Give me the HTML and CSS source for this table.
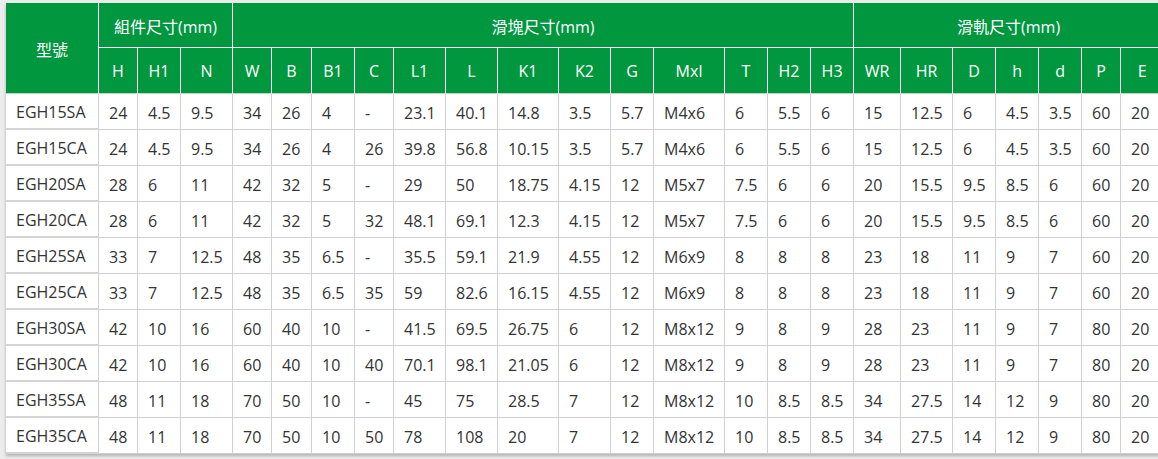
FILE: index.html
```html
<!DOCTYPE html>
<html lang="zh-Hant">
<head>
<meta charset="utf-8">
<title>EGH 規格表</title>
<link rel="stylesheet" href="styles.css">
</head>
<body>
<div class="wrap">
<table class="spec">
<colgroup>
<col class="c93"><col class="c39"><col class="c43"><col class="c52">
<col class="c39"><col class="c40"><col class="c43"><col class="c39"><col class="c52"><col class="c52"><col class="c61"><col class="c52"><col class="c43"><col class="c71"><col class="c43"><col class="c43"><col class="c43">
<col class="c47"><col class="c52"><col class="c43"><col class="c43"><col class="c43"><col class="c39"><col class="c43">
</colgroup>
<thead>
<tr class="h1">
<th rowspan="2" class="model-h">型號</th>
<th colspan="3">組件尺寸(mm)</th>
<th colspan="13">滑塊尺寸(mm)</th>
<th colspan="7">滑軌尺寸(mm)</th>
</tr>
<tr class="h2">
<th>H</th><th>H1</th><th>N</th>
<th>W</th><th>B</th><th>B1</th><th>C</th><th>L1</th><th>L</th><th>K1</th><th>K2</th><th>G</th><th>Mxl</th><th>T</th><th>H2</th><th>H3</th>
<th>WR</th><th>HR</th><th>D</th><th>h</th><th>d</th><th>P</th><th>E</th>
</tr>
</thead>
<tbody>
<tr><td>EGH15SA</td><td>24</td><td>4.5</td><td>9.5</td><td>34</td><td>26</td><td>4</td><td>-</td><td>23.1</td><td>40.1</td><td>14.8</td><td>3.5</td><td>5.7</td><td>M4x6</td><td>6</td><td>5.5</td><td>6</td><td>15</td><td>12.5</td><td>6</td><td>4.5</td><td>3.5</td><td>60</td><td>20</td></tr>
<tr><td>EGH15CA</td><td>24</td><td>4.5</td><td>9.5</td><td>34</td><td>26</td><td>4</td><td>26</td><td>39.8</td><td>56.8</td><td>10.15</td><td>3.5</td><td>5.7</td><td>M4x6</td><td>6</td><td>5.5</td><td>6</td><td>15</td><td>12.5</td><td>6</td><td>4.5</td><td>3.5</td><td>60</td><td>20</td></tr>
<tr><td>EGH20SA</td><td>28</td><td>6</td><td>11</td><td>42</td><td>32</td><td>5</td><td>-</td><td>29</td><td>50</td><td>18.75</td><td>4.15</td><td>12</td><td>M5x7</td><td>7.5</td><td>6</td><td>6</td><td>20</td><td>15.5</td><td>9.5</td><td>8.5</td><td>6</td><td>60</td><td>20</td></tr>
<tr><td>EGH20CA</td><td>28</td><td>6</td><td>11</td><td>42</td><td>32</td><td>5</td><td>32</td><td>48.1</td><td>69.1</td><td>12.3</td><td>4.15</td><td>12</td><td>M5x7</td><td>7.5</td><td>6</td><td>6</td><td>20</td><td>15.5</td><td>9.5</td><td>8.5</td><td>6</td><td>60</td><td>20</td></tr>
<tr><td>EGH25SA</td><td>33</td><td>7</td><td>12.5</td><td>48</td><td>35</td><td>6.5</td><td>-</td><td>35.5</td><td>59.1</td><td>21.9</td><td>4.55</td><td>12</td><td>M6x9</td><td>8</td><td>8</td><td>8</td><td>23</td><td>18</td><td>11</td><td>9</td><td>7</td><td>60</td><td>20</td></tr>
<tr><td>EGH25CA</td><td>33</td><td>7</td><td>12.5</td><td>48</td><td>35</td><td>6.5</td><td>35</td><td>59</td><td>82.6</td><td>16.15</td><td>4.55</td><td>12</td><td>M6x9</td><td>8</td><td>8</td><td>8</td><td>23</td><td>18</td><td>11</td><td>9</td><td>7</td><td>60</td><td>20</td></tr>
<tr><td>EGH30SA</td><td>42</td><td>10</td><td>16</td><td>60</td><td>40</td><td>10</td><td>-</td><td>41.5</td><td>69.5</td><td>26.75</td><td>6</td><td>12</td><td>M8x12</td><td>9</td><td>8</td><td>9</td><td>28</td><td>23</td><td>11</td><td>9</td><td>7</td><td>80</td><td>20</td></tr>
<tr><td>EGH30CA</td><td>42</td><td>10</td><td>16</td><td>60</td><td>40</td><td>10</td><td>40</td><td>70.1</td><td>98.1</td><td>21.05</td><td>6</td><td>12</td><td>M8x12</td><td>9</td><td>8</td><td>9</td><td>28</td><td>23</td><td>11</td><td>9</td><td>7</td><td>80</td><td>20</td></tr>
<tr><td>EGH35SA</td><td>48</td><td>11</td><td>18</td><td>70</td><td>50</td><td>10</td><td>-</td><td>45</td><td>75</td><td>28.5</td><td>7</td><td>12</td><td>M8x12</td><td>10</td><td>8.5</td><td>8.5</td><td>34</td><td>27.5</td><td>14</td><td>12</td><td>9</td><td>80</td><td>20</td></tr>
<tr><td>EGH35CA</td><td>48</td><td>11</td><td>18</td><td>70</td><td>50</td><td>10</td><td>50</td><td>78</td><td>108</td><td>20</td><td>7</td><td>12</td><td>M8x12</td><td>10</td><td>8.5</td><td>8.5</td><td>34</td><td>27.5</td><td>14</td><td>12</td><td>9</td><td>80</td><td>20</td></tr>
</tbody>
</table>
</div>
</body>
</html>
```
FILE: styles.css
```css
html, body {
  margin: 0;
  padding: 0;
  background: #ececec;
  overflow: hidden;
}
.wrap {
  padding: 3px 0 6px 6px;
  width: 1152px;
  overflow: hidden;
}
.spec {
  table-layout: fixed;
  width: 1158px;
  border-collapse: separate;
  border-spacing: 0;
  background: #fff;
  font-family: "Open Sans", "Noto Sans CJK TC", sans-serif;
  box-shadow: 0 2px 3px rgba(0, 0, 0, 0.25);
}
.spec th, .spec td {
  box-sizing: border-box;
  padding: 0;
  white-space: nowrap;
  overflow: hidden;
}
.spec th {
  background: #00973f;
  color: #fff;
  font-weight: normal;
  font-size: 16px;
  text-align: center;
  border-right: 1px solid #fff;
  border-bottom: 1px solid #fff;
}
.spec .h1 th { height: 45px; padding-top: 1px; }
.spec .h2 th { height: 46px; }
.spec th.model-h { border-bottom: 1px solid #ccc; }
.spec .h2 th { border-bottom: 1px solid #ccc; }
.spec td {
  height: 36px;
  font-size: 16px;
  color: #333;
  text-align: left;
  padding: 2px 0 0 10px;
  border-right: 1px solid #d0d0d0;
  border-bottom: 1px solid #d0d0d0;
}
.spec td:first-child { border-bottom: 2px solid #d4d4d4; }
.c93 { width: 93px; }
.c39 { width: 39px; }
.c40 { width: 40px; }
.c43 { width: 43px; }
.c47 { width: 47px; }
.c52 { width: 52px; }
.c61 { width: 61px; }
.c71 { width: 71px; }
```
